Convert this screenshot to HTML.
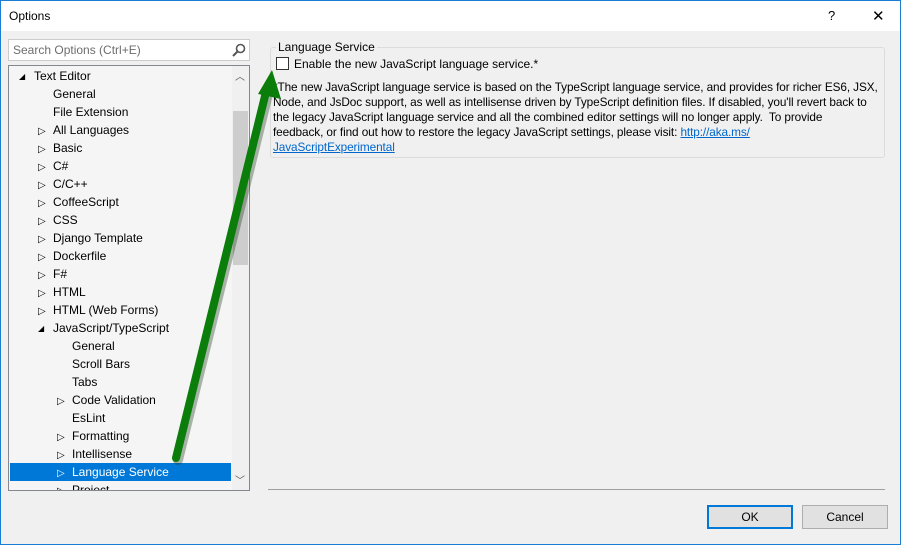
<!DOCTYPE html>
<html><head><style>
*{margin:0;padding:0;box-sizing:border-box}
body{width:901px;height:545px;background:#f0f0f0;font-family:"Liberation Sans",sans-serif;font-size:12px;color:#000;position:relative;overflow:hidden}
.win{position:absolute;left:0;top:0;width:901px;height:545px;border:1px solid #1a7fd4}
.title{position:absolute;left:1px;top:1px;width:899px;height:30px;background:#fff}
.title span{position:absolute;left:8px;top:8px;font-size:12px}
.q{position:absolute;left:827px;top:7px;font-size:13px}
.x{position:absolute;left:871px;top:6px;font-size:15px;font-weight:300}
.search{position:absolute;left:8px;top:39px;width:242px;height:22px;background:#fff;border:1px solid #ccc;color:#6d6d6d;padding:3px 4px}
.tree{position:absolute;left:8px;top:65px;width:242px;height:426px;background:#f5f5f5;border:1px solid #828790;overflow:hidden}
.row{position:absolute;height:18px;line-height:18px;white-space:nowrap}
.sel{position:absolute;left:1px;top:397px;width:221px;height:18px;background:#0078d7}
.sb{position:absolute;left:223px;top:0;width:17px;height:424px;background:#f0f0f0}
.thumb{position:absolute;left:1px;top:45px;width:15px;height:154px;background:#cdcdcd}
.tri{font-size:8px;position:absolute}
.t{font-size:10px;display:inline-block;width:15px}
fieldset{position:absolute;left:270px;top:47px;width:615px;height:111px;border:1px solid #dcdcdc;border-radius:3px}
.lbl{position:absolute;left:276px;top:40px;background:#f0f0f0;padding:0 2px}
.cb{position:absolute;left:276px;top:57px;width:13px;height:13px;background:#fff;border:1px solid #333}
.p{position:absolute;left:273px;top:80px;width:620px;line-height:15px;font-size:11.8px;letter-spacing:-0.1px;white-space:nowrap}
a{color:#0066cc;text-decoration:underline}
.sep{position:absolute;left:268px;top:489px;width:617px;height:1px;background:#a0a0a0}
.btn{position:absolute;top:505px;height:24px;background:#e1e1e1;border:1px solid #adadad;text-align:center;line-height:22px}
</style></head><body>
<div class="win"></div>
<div class="title"><span>Options</span><div class="q">?</div><div class="x">✕</div></div>
<div class="search">Search Options (Ctrl+E)<svg style="position:absolute;right:3px;top:3px" width="14" height="14"><circle cx="8.5" cy="5.5" r="4" fill="none" stroke="#555" stroke-width="1.6"/><line x1="5.5" y1="8.5" x2="1" y2="13" stroke="#555" stroke-width="2"/></svg></div>
<div class="tree">
<div class="sel"></div>
<div class="tri" style="left:10px;top:6px">◢</div><div class="row" style="left:25px;top:1px">Text Editor</div>
<div class="row" style="left:44px;top:19px">General</div>
<div class="row" style="left:44px;top:37px">File Extension</div>
<div class="row" style="left:29px;top:55px"><span class="t">▷</span>All Languages</div>
<div class="row" style="left:29px;top:73px"><span class="t">▷</span>Basic</div>
<div class="row" style="left:29px;top:91px"><span class="t">▷</span>C#</div>
<div class="row" style="left:29px;top:109px"><span class="t">▷</span>C/C++</div>
<div class="row" style="left:29px;top:127px"><span class="t">▷</span>CoffeeScript</div>
<div class="row" style="left:29px;top:145px"><span class="t">▷</span>CSS</div>
<div class="row" style="left:29px;top:163px"><span class="t">▷</span>Django Template</div>
<div class="row" style="left:29px;top:181px"><span class="t">▷</span>Dockerfile</div>
<div class="row" style="left:29px;top:199px"><span class="t">▷</span>F#</div>
<div class="row" style="left:29px;top:217px"><span class="t">▷</span>HTML</div>
<div class="row" style="left:29px;top:235px"><span class="t">▷</span>HTML (Web Forms)</div>
<div class="tri" style="left:29px;top:258px">◢</div><div class="row" style="left:44px;top:253px">JavaScript/TypeScript</div>
<div class="row" style="left:63px;top:271px">General</div>
<div class="row" style="left:63px;top:289px">Scroll Bars</div>
<div class="row" style="left:63px;top:307px">Tabs</div>
<div class="row" style="left:48px;top:325px"><span class="t">▷</span>Code Validation</div>
<div class="row" style="left:63px;top:343px">EsLint</div>
<div class="row" style="left:48px;top:361px"><span class="t">▷</span>Formatting</div>
<div class="row" style="left:48px;top:379px"><span class="t">▷</span>Intellisense</div>
<div class="row" style="left:48px;top:397px;color:#fff"><span class="t">▷</span>Language Service</div>
<div class="row" style="left:48px;top:415px"><span class="t">▷</span>Project</div>
<div class="sb"><div class="thumb"></div><div style="position:absolute;left:3px;top:2px;font-size:10px;color:#555">︿</div><div style="position:absolute;left:3px;top:406px;font-size:10px;color:#555">﹀</div></div>
</div>
<fieldset></fieldset>
<div class="lbl">Language Service</div>
<div class="cb"></div>
<div style="position:absolute;left:294px;top:57px">Enable the new JavaScript language service.*</div>
<div class="p">*The new JavaScript language service is based on the TypeScript language service, and provides for richer ES6, JSX,<br>Node, and JsDoc support, as well as intellisense driven by TypeScript definition files. If disabled, you'll revert back to<br>the legacy JavaScript language service and all the combined editor settings will no longer apply.&nbsp; To provide<br>feedback, or find out how to restore the legacy JavaScript settings, please visit: <a>http://aka.ms/</a><br><a>JavaScriptExperimental</a></div>
<svg style="position:absolute;left:0;top:0" width="901" height="545">
<line x1="176" y1="458" x2="266" y2="92" stroke="#1a3a1a" stroke-opacity="0.35" stroke-width="10" stroke-linecap="round" transform="translate(2,2)"/>
<line x1="176" y1="458" x2="266" y2="92" stroke="#0a7d0a" stroke-width="8" stroke-linecap="round"/>
<polygon points="272,70 258,94 281,99" fill="#0a7d0a"/>
</svg>
<div class="sep"></div>
<div class="btn" style="left:707px;width:86px;border:2px solid #0078d7;line-height:20px">OK</div>
<div class="btn" style="left:802px;width:86px">Cancel</div>
</body></html>
